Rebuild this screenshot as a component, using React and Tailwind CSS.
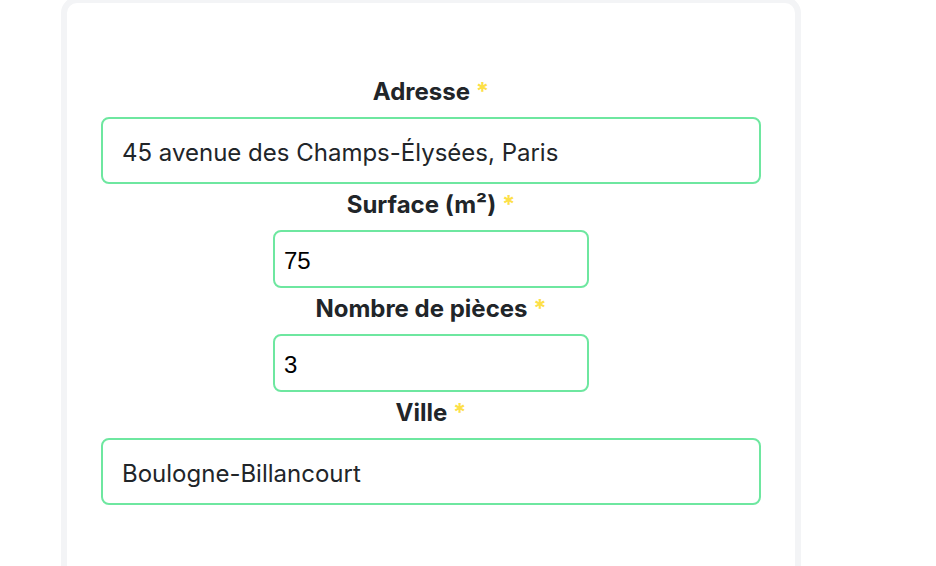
import { useState } from 'react';

const Label = ({ children }) => (
  <label className="mb-[11px] block text-center font-['Inter',sans-serif] text-[24px] font-bold leading-[28px] text-[#212529]">
    {children} <span className="text-[#fde047]">*</span>
  </label>
);

const Field = ({ label, value, small = false }) => {
  const [val, setVal] = useState(value);
  return (
    <div className="flex flex-col items-center">
      <Label>{label}</Label>
      {small ? (
        <input
          value={val}
          onChange={(e) => setVal(e.target.value)}
          className="h-[58px] w-[316px] rounded-lg border-2 border-[#6ee7a0] bg-white px-[9px] pt-[3px] font-['Liberation_Sans',Arial,sans-serif] text-[24px] text-black outline-none"
        />
      ) : (
        <input
          value={val}
          onChange={(e) => setVal(e.target.value)}
          className="h-[67px] w-[660px] rounded-lg border-2 border-[#6ee7a0] bg-white px-[19px] pt-[4px] font-['Inter',sans-serif] text-[24px] text-[#212529] outline-none"
        />
      )}
    </div>
  );
};

export default function App() {
  return (
    <div className="min-h-screen overflow-hidden bg-white">
      <div className="ml-[61px] -mt-[3px] h-[600px] w-[740px] rounded-2xl border-[6px] border-[#f3f4f6] bg-white">
        <div className="flex flex-col gap-[7px] pt-[75px]">
          <Field label="Adresse" value="45 avenue des Champs-Élysées, Paris" />
          <Field label="Surface (m²)" value="75" small />
          <Field label="Nombre de pièces" value="3" small />
          <Field label="Ville" value="Boulogne-Billancourt" />
        </div>
      </div>
    </div>
  );
}
